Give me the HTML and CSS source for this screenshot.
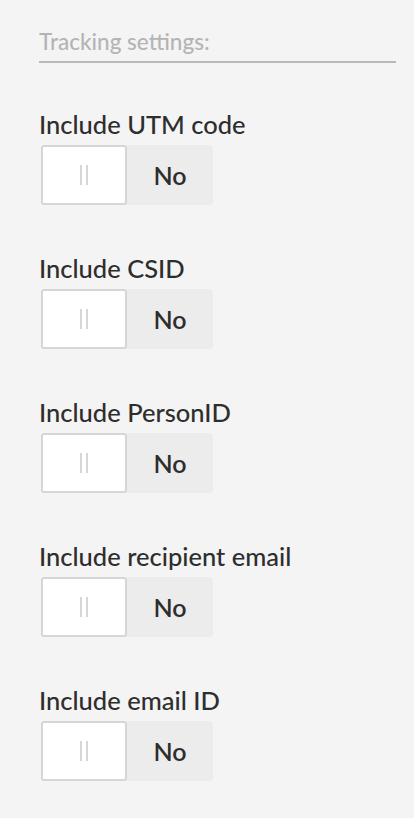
FILE: index.html
```html
<!DOCTYPE html>
<html>
<head>
<meta charset="utf-8">
<link rel="stylesheet" href="styles.css">
</head>
<body>
<div class="panel">
  <div class="section-title">Tracking settings:</div>
  <div class="field">
    <div class="label">Include UTM code</div>
    <div class="switch"><div class="handle"><span class="grip"></span></div><div class="state">No</div></div>
  </div>
  <div class="field">
    <div class="label">Include CSID</div>
    <div class="switch"><div class="handle"><span class="grip"></span></div><div class="state">No</div></div>
  </div>
  <div class="field">
    <div class="label">Include PersonID</div>
    <div class="switch"><div class="handle"><span class="grip"></span></div><div class="state">No</div></div>
  </div>
  <div class="field">
    <div class="label">Include recipient email</div>
    <div class="switch"><div class="handle"><span class="grip"></span></div><div class="state">No</div></div>
  </div>
  <div class="field">
    <div class="label">Include email ID</div>
    <div class="switch"><div class="handle"><span class="grip"></span></div><div class="state">No</div></div>
  </div>
</div>
</body>
</html>
```
FILE: styles.css
```css
html, body {
  margin: 0;
  padding: 0;
  background: #f4f4f4;
  font-family: Lato, "Open Sans", sans-serif;
}
.panel {
  padding: 28px 18px 0 39px;
}
.section-title {
  font-size: 22.5px;
  font-weight: 500;
  line-height: 28px;
  color: #b4b4b4;
  padding-bottom: 5px;
  border-bottom: 2px solid #b9b9b9;
}
.field {
  margin-top: 46px;
}
.field + .field {
  margin-top: 48px;
}
.label {
  font-size: 25.5px;
  font-weight: 500;
  line-height: 30px;
  color: #2e2e2e;
  margin-bottom: 6px;
}
.switch {
  display: flex;
  width: 172px;
  height: 60px;
  margin-left: 2px;
  background: #ececec;
  border-radius: 4px;
}
.handle {
  box-sizing: border-box;
  width: 86px;
  height: 60px;
  background: #fff;
  border: 2px solid #d6d6d6;
  border-radius: 3px;
  display: flex;
  align-items: center;
  justify-content: center;
}
.grip {
  width: 4px;
  height: 20px;
  border-left: 2px solid #d6d6d6;
  border-right: 2px solid #d6d6d6;
}
.state {
  flex: 1;
  display: flex;
  align-items: center;
  justify-content: center;
  font-size: 25px;
  font-weight: 600;
  color: #2e2e2e;
}
```
